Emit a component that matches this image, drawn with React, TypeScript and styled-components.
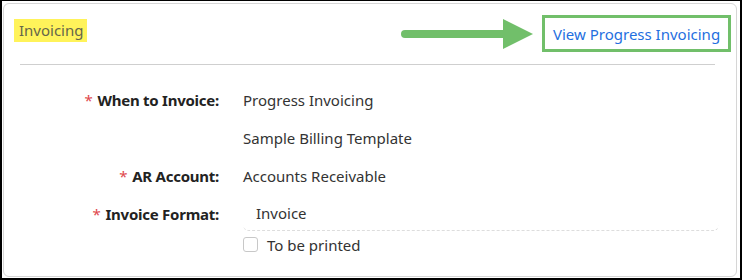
import React from "react";
import styled, { createGlobalStyle } from "styled-components";

const Global = createGlobalStyle`
  html, body { margin: 0; padding: 0; background: #fff; }
  * { box-sizing: border-box; }
`;

const Frame = styled.div`
  width: 742px;
  height: 280px;
  border-style: solid;
  border-color: #000;
  border-width: 1px 2px 2px 2px;
  padding: 2px 3px 1px 1px;
  background: #fff;
  font-family: "Segoe UI", "Noto Sans", "Open Sans", sans-serif;
`;

const Card = styled.div`
  height: 100%;
  border: 1px solid #d6d6d6;
  border-radius: 6px;
  padding: 11px 5px 0 10px;
`;

const Header = styled.div`
  display: flex;
  align-items: flex-start;
  height: 49px;
`;

const Title = styled.span`
  margin-top: 4px;
  background: #fff35a;
  color: #66664a;
  font-size: 15px;
  line-height: 23px;
  padding: 0 3px 0 5px;
`;

const Spacer = styled.div`
  flex: 1;
`;

const Arrow = styled.svg`
  margin-top: 4px;
  margin-right: 9px;
  display: block;
`;

const LinkBox = styled.a`
  display: flex;
  align-items: center;
  height: 37px;
  width: 189px;
  border: 3px solid #71bf6a;
  padding-left: 8px;
  color: #1f6fe0;
  font-size: 15px;
  text-decoration: none;
`;

const Rule = styled.hr`
  margin: 0 16px 0 6px;
  border: none;
  border-top: 1px solid #cfcfcf;
`;

const Form = styled.div`
  display: grid;
  grid-template-columns: 205px 1fr;
  column-gap: 24px;
  grid-auto-rows: 38px;
  padding-top: 16px;
  padding-right: 12px;
`;

const Label = styled.div`
  display: flex;
  align-items: center;
  justify-content: flex-end;
  font-weight: 700;
  font-size: 15px;
  letter-spacing: -0.25px;
  color: #222;
`;

const Star = styled.span`
  color: #e0474c;
  font-weight: 400;
  margin-right: 5px;
`;

const Value = styled.div<{ $boxed?: boolean }>`
  display: flex;
  align-items: center;
  font-size: 15px;
  color: #333;
  padding-left: ${(p) => (p.$boxed ? "13px" : "0")};
  border-bottom: ${(p) => (p.$boxed ? "1px dashed #ddd" : "none")};
  border-radius: ${(p) => (p.$boxed ? "0 0 6px 6px" : "0")};
  height: ${(p) => (p.$boxed ? "36px" : "auto")};
`;

const CheckRow = styled.label`
  grid-column: 2;
  display: flex;
  align-items: center;
  gap: 9px;
  font-size: 15px;
  color: #333;
  height: 23px;
`;

const Box = styled.span`
  width: 15px;
  height: 15px;
  border: 1px solid #c8c8c8;
  border-radius: 3px;
  background: #fff;
`;

export default function App() {
  return (
    <>
      <Global />
      <Frame>
        <Card>
          <Header>
            <Title>Invoicing</Title>
            <Spacer />
            <Arrow width="132" height="30" viewBox="0 0 132 30">
              <rect x="0" y="11" width="106" height="8" rx="4" fill="#71bf6a" />
              <polygon points="102,0 132,15 102,30" fill="#71bf6a" />
            </Arrow>
            <LinkBox href="#">View Progress Invoicing</LinkBox>
          </Header>
          <Rule />
          <Form>
            <Label>
              <Star>*</Star>When to Invoice:
            </Label>
            <Value>Progress Invoicing</Value>
            <div />
            <Value>Sample Billing Template</Value>
            <Label>
              <Star>*</Star>AR Account:
            </Label>
            <Value>Accounts Receivable</Value>
            <Label>
              <Star>*</Star>Invoice Format:
            </Label>
            <Value $boxed>Invoice</Value>
            <CheckRow>
              <Box />
              To be printed
            </CheckRow>
          </Form>
        </Card>
      </Frame>
    </>
  );
}
